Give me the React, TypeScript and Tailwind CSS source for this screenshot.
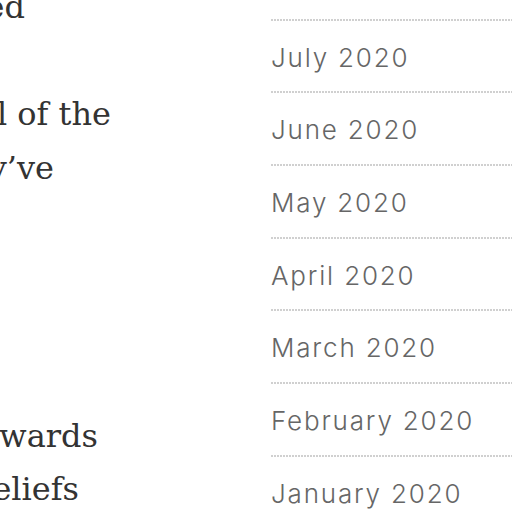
const archives = [
  "August 2020",
  "July 2020",
  "June 2020",
  "May 2020",
  "April 2020",
  "March 2020",
  "February 2020",
  "January 2020",
  "December 2019",
];

// excerpt of the post body; each line is the tail of a wrapped line
const lines: { text: string; end: string }[] = [
  { text: "the way we work has changed", end: "w-[25px]" },
  { text: "so much over the last few months", end: "w-0" },
  { text: "and we have learned from all of the", end: "w-[111px]" },
  { text: "people who told us what they\u2019ve", end: "w-[54px]" },
  { text: "been through during this time", end: "w-0" },
  { text: "and how it changed their lives", end: "w-0" },
  { text: "for the better or for the worse", end: "w-0" },
  { text: "and how it shaped the way", end: "w-0" },
  { text: "they look at the future and towards", end: "w-[98px]" },
  { text: "their work, their family and beliefs", end: "w-[79px]" },
];

export default function App() {
  return (
    <div className="flex h-[512px] w-[512px] overflow-hidden bg-white">
      {/* post content, scrolled and clipped */}
      <div className="w-[240px] shrink-0 overflow-hidden">
        <div className="-mt-[19px] font-['DejaVu_Serif',serif] text-[32px] leading-[53.6px] text-[#333]">
          {lines.map((line, i) => (
            <div key={i} className={`flex justify-end whitespace-nowrap ${line.end}`}>
              <span>{line.text}</span>
            </div>
          ))}
        </div>
      </div>

      {/* sidebar archives */}
      <aside className="ml-[31px] w-[320px] shrink-0">
        <ul className="-mt-[52px] font-['Inter',sans-serif] text-[26px] font-light leading-[30px] tracking-[0.07em] text-[#666]">
          {archives.map((month) => (
            <li key={month}>
              <a href="#" className="block pt-[22px] pb-[18.67px]">
                {month}
              </a>
              <div className="h-[2px] bg-[repeating-linear-gradient(90deg,#d0d0d0_0_2px,transparent_2px_3px)]" />
            </li>
          ))}
        </ul>
      </aside>
    </div>
  );
}
